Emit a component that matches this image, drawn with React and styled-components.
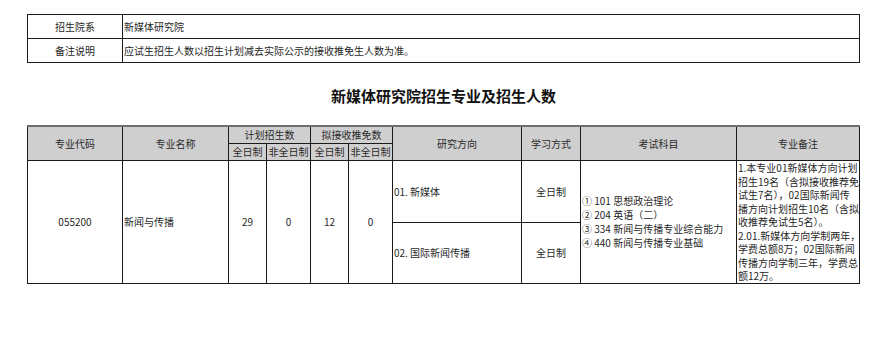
import React from 'react';
import styled, { createGlobalStyle } from 'styled-components';

const GlobalStyle = createGlobalStyle`
  body {
    margin: 0;
    background: #fff;
    font-family: "Noto Sans CJK SC", "Noto Sans", sans-serif;
    color: #1f1f1f;
  }
`;

const Page = styled.div`
  width: 888px;
  height: 341px;
  padding: 14px 0 0 27px;
  box-sizing: border-box;
`;

const Grid = styled.table`
  border-collapse: collapse;
  table-layout: fixed;
  width: ${(p) => p.$width}px;
  font-size: 10px;
  line-height: 13.5px;
`;

const Cell = styled.td`
  border: 1px solid #1a1a1a;
  padding: 0 1px;
  height: ${(p) => p.$h || 'auto'};
  text-align: ${(p) => p.$align || 'center'};
  vertical-align: middle;
  white-space: nowrap;
  overflow: hidden;
`;

const Head = styled.th`
  border: 1px solid #1a1a1a;
  border-top: ${(p) => (p.$sub ? '1px solid #1a1a1a' : '2px solid #6e6e6e')};
  background: #cfcfcf;
  font-weight: 400;
  color: #2a2a2a;
  padding: 0;
  height: 16px;
  text-align: center;
  vertical-align: middle;
  white-space: nowrap;
`;

const Title = styled.h1`
  margin: 0;
  width: 833px;
  height: 62px;
  padding-top: 2px;
  box-sizing: border-box;
  display: flex;
  align-items: center;
  justify-content: center;
  font-size: 15px;
  font-weight: 700;
  color: #111;
`;

const Lines = styled.div`
  white-space: nowrap;
  line-height: ${(p) => p.$lh || 13.5}px;
`;

const topRows = [
  ['招生院系', '新媒体研究院'],
  ['备注说明', '应试生招生人数以招生计划减去实际公示的接收推免生人数为准。'],
];

const colWidths = [95, 106, 38, 44, 38, 44, 129, 59, 156, 123];

const subjects = [
  '① 101 思想政治理论',
  '② 204 英语（二）',
  '③ 334 新闻与传播专业综合能力',
  '④ 440 新闻与传播专业基础',
];

const remarks = [
  '1.本专业01新媒体方向计划',
  '招生19名（含拟接收推荐免',
  '试生7名），02国际新闻传',
  '播方向计划招生10名（含拟',
  '收推荐免试生5名）。',
  '2.01.新媒体方向学制两年，',
  '学费总额8万；02国际新闻',
  '传播方向学制三年，学费总',
  '额12万。',
];

const App = () => (
  <Page>
    <GlobalStyle />
    <Grid $width={833}>
      <colgroup>
        <col style={{ width: 95 }} />
        <col />
      </colgroup>
      <tbody>
        {topRows.map(([label, value]) => (
          <tr key={label}>
            <Cell $h="23px">{label}</Cell>
            <Cell $h="23px" $align="left">{value}</Cell>
          </tr>
        ))}
      </tbody>
    </Grid>

    <Title>新媒体研究院招生专业及招生人数</Title>

    <Grid $width={833}>
      <colgroup>
        {colWidths.map((w, i) => (
          <col key={i} style={{ width: w }} />
        ))}
      </colgroup>
      <thead>
        <tr>
          <Head rowSpan={2}>专业代码</Head>
          <Head rowSpan={2}>专业名称</Head>
          <Head colSpan={2}>计划招生数</Head>
          <Head colSpan={2}>拟接收推免数</Head>
          <Head rowSpan={2}>研究方向</Head>
          <Head rowSpan={2}>学习方式</Head>
          <Head rowSpan={2}>考试科目</Head>
          <Head rowSpan={2}>专业备注</Head>
        </tr>
        <tr>
          <Head $sub>全日制</Head>
          <Head $sub>非全日制</Head>
          <Head $sub>全日制</Head>
          <Head $sub>非全日制</Head>
        </tr>
      </thead>
      <tbody>
        <tr>
          <Cell rowSpan={2}>055200</Cell>
          <Cell rowSpan={2} $align="left">新闻与传播</Cell>
          <Cell rowSpan={2}>29</Cell>
          <Cell rowSpan={2}>0</Cell>
          <Cell rowSpan={2}>12</Cell>
          <Cell rowSpan={2}>0</Cell>
          <Cell $h="60px" $align="left">01. 新媒体</Cell>
          <Cell $h="60px">全日制</Cell>
          <Cell rowSpan={2} $align="left">
            <Lines $lh={14}>
              {subjects.map((s) => (
                <div key={s}>{s}</div>
              ))}
            </Lines>
          </Cell>
          <Cell rowSpan={2} $align="left">
            <Lines>
              {remarks.map((s) => (
                <div key={s}>{s}</div>
              ))}
            </Lines>
          </Cell>
        </tr>
        <tr>
          <Cell $h="59px" $align="left">02. 国际新闻传播</Cell>
          <Cell $h="59px">全日制</Cell>
        </tr>
      </tbody>
    </Grid>
  </Page>
);

export default App;
